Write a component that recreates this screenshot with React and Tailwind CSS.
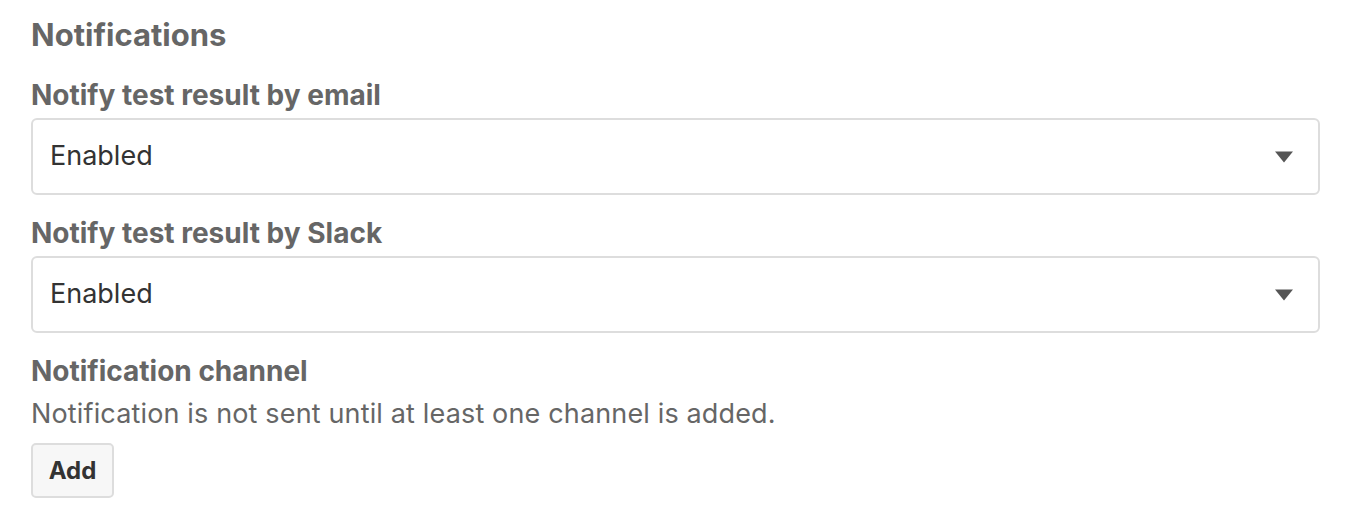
import { useState } from "react";

const options = ["Enabled", "Disabled"];

function SelectField({ label, value, onChange }) {
  return (
    <div className="flex flex-col">
      <label className="text-[28px] leading-[32px] font-bold text-[#666666] mb-[7px]">{label}</label>
      <div className="relative">
        <select
          value={value}
          onChange={(e) => onChange(e.target.value)}
          className="appearance-none w-full h-[77px] rounded-[6px] border-2 border-[#dddddd] bg-white pl-[17px] pr-[60px] text-[27px] text-[#333333] outline-none"
        >
          {options.map((o) => (
            <option key={o}>{o}</option>
          ))}
        </select>
        <span className="pointer-events-none absolute right-[27px] top-1/2 -translate-y-1/2 w-0 h-0 border-l-[9px] border-r-[9px] border-t-[11px] border-l-transparent border-r-transparent border-t-[#555555]" />
      </div>
    </div>
  );
}

export default function App() {
  const [email, setEmail] = useState("Enabled");
  const [slack, setSlack] = useState("Enabled");

  return (
    <div className="bg-white w-[1346px] h-[526px] px-[31px] pt-[15px] font-['Inter',sans-serif]">
      <div className="w-[1289px] flex flex-col">
        <h2 className="text-[31px] leading-[40px] font-bold text-[#666666] mb-[24px]">Notifications</h2>

        <div className="flex flex-col gap-[22px]">
          <SelectField label="Notify test result by email" value={email} onChange={setEmail} />
          <SelectField label="Notify test result by Slack" value={slack} onChange={setSlack} />

          <div className="flex flex-col">
            <h3 className="text-[28px] leading-[32px] font-bold text-[#666666]">Notification channel</h3>
            <p className="text-[27px] leading-[32px] tracking-[0.15px] text-[#666666] mt-[11px]">
              Notification is not sent until at least one channel is added.
            </p>
            <div className="mt-[13px]">
              <button
                type="button"
                className="h-[55px] w-[83px] rounded-[5px] border-2 border-[#dddddd] bg-[#f7f7f7] text-[24px] font-bold text-[#333333]"
              >
                Add
              </button>
            </div>
          </div>
        </div>
      </div>
    </div>
  );
}
